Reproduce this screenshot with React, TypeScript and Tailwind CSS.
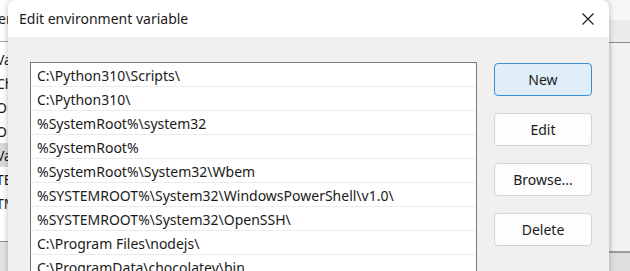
import React from "react";

const PATHS = [
  "C:\\Python310\\Scripts\\",
  "C:\\Python310\\",
  "%SystemRoot%\\system32",
  "%SystemRoot%",
  "%SystemRoot%\\System32\\Wbem",
  "%SYSTEMROOT%\\System32\\WindowsPowerShell\\v1.0\\",
  "%SYSTEMROOT%\\System32\\OpenSSH\\",
  "C:\\Program Files\\nodejs\\",
  "C:\\ProgramData\\chocolatey\\bin",
];

const BG_ROWS = [
  { t: "Va", sel: false },
  { t: "Ch", sel: false },
  { t: "Or", sel: false },
  { t: "Or", sel: false },
  { t: "Va", sel: true },
  { t: "TE", sel: false },
  { t: "TM", sel: false },
];

const App = () => {
  return (
    <div
      className="relative w-[630px] h-[271px] overflow-hidden bg-[#f0f0f0] text-[#1a1a1a]"
      style={{ fontFamily: '"Noto Sans", "Open Sans", sans-serif' }}
    >
      {/* window behind, left side */}
      <div className="absolute left-0 top-0 w-[40px] h-[271px] flex flex-col bg-white overflow-hidden">
        <div className="h-[42px] flex items-center text-[14px] border-b border-[#a0a0a0] pb-[4px]">
          <span className="-ml-[2px]">er</span>
        </div>
        <div className="flex flex-col pt-[5px] text-[14px]">
          {BG_ROWS.map((r, i) => (
            <div
              key={i}
              className={`h-[24px] flex items-center ${r.sel ? "bg-[#d9d9d9]" : ""}`}
            >
              <span className="-ml-[4px]">{r.t}</span>
            </div>
          ))}
        </div>
        <div className="flex-1" />
        <div className="h-[30px] border-t border-[#8c8c8c] bg-[#e3e3e3]" />
      </div>

      {/* window behind, right side */}
      <div className="absolute left-[600px] top-0 w-[30px] h-[271px] flex flex-col">
        <div className="h-[20px] bg-[#f7f7f7]" />
        <div className="h-[23px] bg-[#ebebeb] border-b border-[#8a8a8a]" />
        <div className="flex-1 bg-[#f2f2f2] border-l-[12px] border-[#e8e8e8]" />
        <div className="h-[20px] border-t-2 border-[#9a9a9a] bg-[#dedede]" />
      </div>

      {/* dialog */}
      <div className="absolute left-[8px] top-0 w-[601px] h-[300px] rounded-t-[8px] overflow-hidden bg-[#f0f0f0] shadow-[0_0_6px_rgba(0,0,0,0.25)] flex flex-col">
        <div className="h-[37px] shrink-0 bg-white flex items-center justify-between pl-[11px] pr-[14px]">
          <span className="text-[14px] leading-none">Edit environment variable</span>
          <svg width="14" height="14" viewBox="0 0 14 14">
            <path d="M1.5 1.5 L12.5 12.5 M12.5 1.5 L1.5 12.5" stroke="#1a1a1a" strokeWidth="1.1" fill="none" />
          </svg>
        </div>
        <div className="flex pl-[22px] pt-[25px] gap-[17px]">
          <div className="w-[447px] h-[240px] bg-white border border-[#7a7a7a] flex flex-col">
            {PATHS.map((p, i) => (
              <div
                key={i}
                className="h-[24px] shrink-0 flex items-center pl-[6px] pt-[2px] text-[14px] border-b border-[#ebebeb] whitespace-nowrap"
              >
                {p}
              </div>
            ))}
          </div>
          <div className="flex flex-col gap-[17px] pt-[1px]">
            <button className="w-[98px] h-[33px] rounded-[4px] border border-[#3c8fd2] bg-[#e0eef9] text-[14px]">
              New
            </button>
            <button className="w-[98px] h-[33px] rounded-[4px] border border-[#d3d3d3] bg-[#fdfdfd] text-[14px]">
              Edit
            </button>
            <button className="w-[98px] h-[33px] rounded-[4px] border border-[#d3d3d3] bg-[#fdfdfd] text-[14px]">
              Browse...
            </button>
            <button className="w-[98px] h-[33px] rounded-[4px] border border-[#d3d3d3] bg-[#fdfdfd] text-[14px]">
              Delete
            </button>
          </div>
        </div>
      </div>
    </div>
  );
};

export default App;
